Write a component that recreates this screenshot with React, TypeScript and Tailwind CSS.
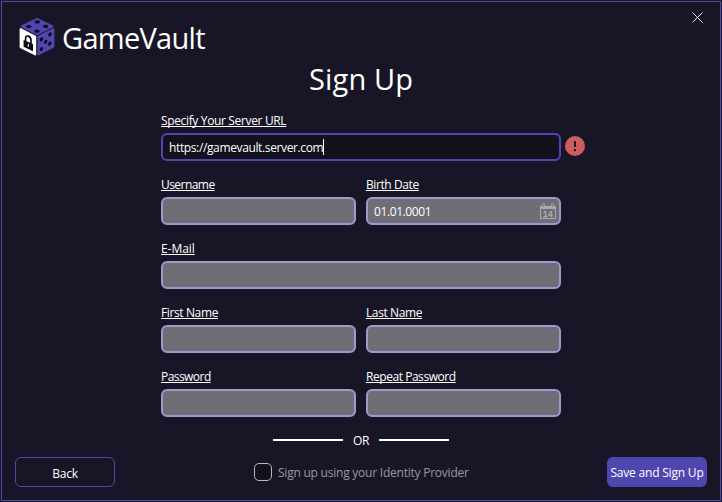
import type { ReactNode } from "react";

function Logo() {
  return (
    <svg width="36" height="39" viewBox="0 0 36 39" className="shrink-0">
      <g strokeLinejoin="round" strokeWidth="2">
        <path d="M18 1 33.6 8.3 18 16.1 2.6 8.3Z" fill="#5046b0" stroke="#5046b0" />
        <path d="M1.6 11.2 16.2 18.6V36.4L1.6 29Z" fill="#fff" stroke="#fff" />
        <path d="M19.4 18.6 34.4 11.2V28.6L19.4 36.4Z" fill="#5046b0" stroke="#5046b0" />
      </g>
      <g fill="#0b0a14">
        <ellipse cx="18.3" cy="3.9" rx="2.7" ry="1.6" />
        <ellipse cx="9.8" cy="8.6" rx="2.7" ry="1.6" />
        <ellipse cx="26.6" cy="8.4" rx="2.7" ry="1.6" />
        <ellipse cx="18" cy="13.2" rx="2.7" ry="1.6" />
        <ellipse cx="31" cy="16.4" rx="1.5" ry="2.2" transform="rotate(35 31 16.4)" />
        <ellipse cx="22.4" cy="21.4" rx="1.5" ry="2.2" transform="rotate(35 22.4 21.4)" />
        <ellipse cx="26.7" cy="23.8" rx="1.5" ry="2.2" transform="rotate(35 26.7 23.8)" />
        <ellipse cx="30.8" cy="25.6" rx="1.5" ry="2.2" transform="rotate(35 30.8 25.6)" />
        <ellipse cx="22.4" cy="31" rx="1.5" ry="2.2" transform="rotate(35 22.4 31)" />
        <path d="M4.6 22 14 26V33.2L4.6 28.8Z" />
      </g>
      <path d="M6.6 23.2V20.4C6.6 16.2 12 18 12 22.4V25.4" fill="none" stroke="#0b0a14" strokeWidth="1.7" />
      <path d="M9.3 26V29" stroke="#fff" strokeWidth="1" />
    </svg>
  );
}

function CalendarIcon() {
  return (
    <svg width="16" height="17" viewBox="0 0 16 17" className="shrink-0">
      <path d="M0 3H16V16H0ZM1 6V15H15V6Z" fill="#aaaaad" fillRule="evenodd" />
      <path d="M2.5 4V1.8a1.1 1.1 0 0 1 2.2 0V4ZM11.3 4V1.8a1.1 1.1 0 0 1 2.2 0V4Z" fill="#6f6e76" stroke="#aaaaad" />
      <text x="7.8" y="13.8" textAnchor="middle" fontSize="9" stroke="#b4b4b6" strokeWidth="0.25" fill="#b4b4b6" fontFamily="Liberation Sans, sans-serif">14</text>
    </svg>
  );
}

function Field({ label, tracking, children }: { label: string; tracking: string; children?: ReactNode }) {
  return (
    <div className="h-16 min-w-0 flex-1">
      <div className={`h-5 whitespace-nowrap leading-[16px] underline decoration-1 underline-offset-[1px] [text-decoration-skip-ink:none] ${tracking}`}>
        {label}
      </div>
      {children ?? <div className="h-7 rounded-[6px] border-2 border-[#a197cc] bg-[#6f6e76]" />}
    </div>
  );
}

export default function App() {
  return (
    <div className="h-[502px] w-[722px] overflow-hidden bg-[#1b1b22] p-px font-['Open_Sans','Noto_Sans',sans-serif] text-[12px] text-white">
      <div className="flex h-[500px] w-[720px] flex-col border border-[#5046b0] bg-[#181626]">
        <header className="flex h-[60px] shrink-0 items-start pl-[17px] pt-4">
          <Logo />
          <h1 className="ml-[7px] whitespace-nowrap text-[29px] leading-[40px] tracking-[-0.7px]">GameVault</h1>
          <button className="ml-auto mr-[17px] mt-[-6px]" aria-label="Close">
            <svg width="11" height="11" viewBox="0 0 11 11"><path d="m.5.5 10 10m0-10-10 10" stroke="#e4e3e8" /></svg>
          </button>
        </header>
        <h2 className="-mt-[3px] h-[53px] shrink-0 pl-[307px] text-[29px] leading-[40px] tracking-[0.15px]">Sign Up</h2>
        <form className="ml-[159px] w-[400px] shrink-0 pt-px">
          <Field label="Specify Your Server URL" tracking="tracking-[-0.35px]">
            <div className="flex w-[430px] items-center">
              <div className="flex h-7 w-[400px] items-center rounded-[6px] border-2 border-[#5046b0] bg-[#12111c] pl-1.5">
                <span className="pt-0.5 tracking-[-0.37px]">https://gamevault.server.com</span>
                <span className="h-4 w-px bg-white" />
              </div>
              <svg width="20" height="20" viewBox="0 0 20 20" className="ml-1 mt-[-2px]">
                <circle cx="10" cy="10" r="10" fill="#cd5c5c" />
                <path d="M10 5V11M10 13V15.2" stroke="#181626" strokeWidth="2" />
              </svg>
            </div>
          </Field>
          <div className="flex gap-2.5">
            <Field label="Username" tracking="tracking-[-0.55px]" />
            <Field label="Birth Date" tracking="tracking-[-0.4px]">
              <div className="flex h-7 items-center justify-between rounded-[6px] border-2 border-[#a197cc] bg-[#6f6e76] pl-1.5 pr-[3px]">
                <span className="pt-0.5 tracking-[-0.4px]">01.01.0001</span>
                <CalendarIcon />
              </div>
            </Field>
          </div>
          <Field label="E-Mail" tracking="tracking-[-0.05px]" />
          <div className="flex gap-2.5">
            <Field label="First Name" tracking="tracking-[-0.38px]" />
            <Field label="Last Name" tracking="tracking-[-0.4px]" />
          </div>
          <div className="flex gap-2.5">
            <Field label="Password" tracking="tracking-[-0.55px]" />
            <Field label="Repeat Password" tracking="tracking-[-0.45px]" />
          </div>
        </form>
        <div className="ml-[271px] flex h-[14px] w-44 shrink-0 items-center justify-between">
          <span className="h-0.5 w-[70px] bg-white" />
          <span className="pt-0.5 tracking-[-0.3px]">OR</span>
          <span className="h-0.5 w-[70px] bg-white" />
        </div>
        <footer className="mt-auto mb-[13px] flex h-[30px] items-center px-[13px]">
          <button className="h-[30px] w-[100px] rounded-[6px] border border-[#5046b0] pt-1 tracking-[-0.3px]">Back</button>
          <label className="ml-[139px] flex items-center gap-1.5 whitespace-nowrap text-[#98979f]">
            <span className="size-[18px] rounded-[5px] border border-[#b7b6bb] bg-[#12111c]" />
            <span className="pt-0.5 tracking-[-0.23px]">Sign up using your Identity Provider</span>
          </label>
          <button className="ml-auto h-[30px] w-[100px] whitespace-nowrap rounded-[6px] bg-[#5046b0] pt-0.5 tracking-[-0.2px]">Save and Sign Up</button>
        </footer>
      </div>
    </div>
  );
}
